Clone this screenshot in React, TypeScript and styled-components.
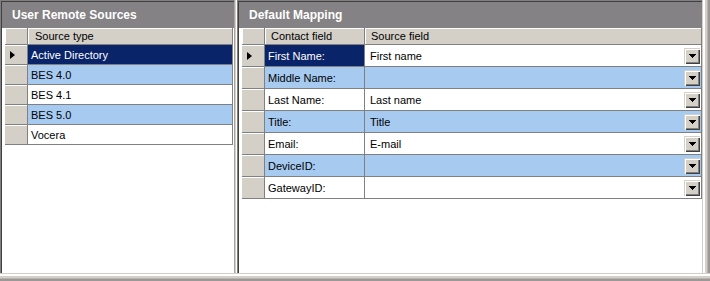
import React from 'react'
import styled, { createGlobalStyle } from 'styled-components'

type Tone = 'sel' | 'blue' | 'white'

const toneBg: Record<Tone, string> = {
  sel: '#0a246a',
  blue: '#a6caf0',
  white: '#ffffff',
}

const GlobalStyle = createGlobalStyle`
  html, body {
    margin: 0;
    padding: 0;
    background: #d4d0c8;
  }
  body {
    font-family: "Liberation Sans", Arial, sans-serif;
    font-size: 11px;
    color: #000;
  }
`

const Window = styled.div`
  width: 710px;
  height: 281px;
  display: flex;
  flex-direction: column;
  background: #d4d0c8;
  overflow: hidden;
`

const Main = styled.div`
  display: flex;
  height: 273px;
`

const Edge = styled.div<{ $vertical?: boolean }>`
  flex: none;
  ${p => (p.$vertical ? 'width: 8px;' : 'height: 8px;')}
  background: linear-gradient(
    to ${p => (p.$vertical ? 'right' : 'bottom')},
    #d4d0c8 0 1px,
    #ffffff 1px 3px,
    #d4d0c8 3px 5px,
    #b8b4b0 5px 6px,
    #9c9898 6px 8px
  );
`

const Pane = styled.section<{ $w: number }>`
  width: ${p => p.$w}px;
  flex: none;
  box-sizing: border-box;
  display: flex;
  flex-direction: column;
  padding: 2px 0 0 2px;
  background: #fff;
  box-shadow: inset 1px 1px #808080, inset 2px 2px #404040;
`

const Splitter = styled.div`
  width: 3px;
  flex: none;
  background: #d4d0c8;
  box-shadow: inset 1px 0 #a8a4a0, inset 2px 0 #d4d0c8, inset -1px 0 #ffffff;
`

const Title = styled.div`
  height: 26px;
  flex: none;
  display: flex;
  align-items: center;
  padding-left: 10px;
  background: #848284;
  color: #fff;
  font-weight: bold;
  font-size: 12px;
  white-space: nowrap;
`

const Body = styled.div`
  flex: 1;
  padding-left: 2px;
  background: #fff;
`

const Table = styled.div<{ $cols: string; $rowH: number }>`
  display: grid;
  grid-template-columns: ${p => p.$cols};
  grid-template-rows: 17px;
  grid-auto-rows: ${p => p.$rowH}px;
  border-left: 1px solid #fff;
`

const HeadCell = styled.div<{ $pad?: number }>`
  box-sizing: border-box;
  display: flex;
  align-items: center;
  padding-left: ${p => p.$pad ?? 0}px;
  background: #d4d0c8;
  border-right: 1px solid #808080;
  border-bottom: 1px solid #808080;
  box-shadow: inset 1px 1px #fff;
  white-space: nowrap;
`

const RowHead = styled.div`
  box-sizing: border-box;
  display: flex;
  align-items: center;
  padding-left: 5px;
  background: #d4d0c8;
  border-right: 1px solid #808080;
  border-bottom: 1px solid #808080;
  box-shadow: inset 0 1px #fff;
`

const Pointer = styled.span`
  width: 0;
  height: 0;
  border-top: 4px solid transparent;
  border-bottom: 4px solid transparent;
  border-left: 5px solid #000;
`

const Cell = styled.div<{ $tone: Tone; $pad: number }>`
  box-sizing: border-box;
  display: flex;
  align-items: center;
  justify-content: space-between;
  padding: 0 1px 0 ${p => p.$pad}px;
  background: ${p => toneBg[p.$tone]};
  color: ${p => (p.$tone === 'sel' ? '#fff' : '#000')};
  border-right: 1px solid #808080;
  border-bottom: 1px solid #808080;
  white-space: nowrap;
  overflow: hidden;
`

const DropButton = styled.span`
  width: 16px;
  height: 16px;
  flex: none;
  display: flex;
  align-items: center;
  justify-content: center;
  background: #d4d0c8;
  box-shadow: inset 1px 1px #d4d0c8, inset 2px 2px #fff, inset -1px -1px #404040,
    inset -2px -2px #808080;
`

const Arrow = () => (
  <svg width="7" height="4" viewBox="0 0 7 4" shapeRendering="crispEdges">
    <path d="M0 0h7v1h-1v1h-1v1h-1v1h-1v-1h-1v-1h-1v-1h-1z" fill="#000" />
  </svg>
)

const sources: [string, Tone][] = [
  ['Active Directory', 'sel'],
  ['BES 4.0', 'blue'],
  ['BES 4.1', 'white'],
  ['BES 5.0', 'blue'],
  ['Vocera', 'white'],
]

const mapping: [string, string][] = [
  ['First Name:', 'First name'],
  ['Middle Name:', ''],
  ['Last Name:', 'Last name'],
  ['Title:', 'Title'],
  ['Email:', 'E-mail'],
  ['DeviceID:', ''],
  ['GatewayID:', ''],
]

export default function App(): JSX.Element {
  return (
    <>
      <GlobalStyle />
      <Window>
        <Main>
          <Pane $w={234}>
            <Title>User Remote Sources</Title>
            <Body>
              <Table $cols="23px 205px" $rowH={20}>
                <HeadCell />
                <HeadCell $pad={7}>Source type</HeadCell>
                {sources.map(([name, tone], i) => (
                  <React.Fragment key={name}>
                    <RowHead>{i === 0 ? <Pointer /> : null}</RowHead>
                    <Cell $tone={tone} $pad={3}>{name}</Cell>
                  </React.Fragment>
                ))}
              </Table>
            </Body>
          </Pane>
          <Splitter />
          <Pane $w={465}>
            <Title>Default Mapping</Title>
            <Body>
              <Table $cols="23px 100px 337px" $rowH={22}>
                <HeadCell />
                <HeadCell $pad={6}>Contact field</HeadCell>
                <HeadCell $pad={6}>Source field</HeadCell>
                {mapping.map(([contact, source], i) => {
                  const tone: Tone = i % 2 === 1 ? 'blue' : 'white'
                  return (
                    <React.Fragment key={contact}>
                      <RowHead>{i === 0 ? <Pointer /> : null}</RowHead>
                      <Cell $tone={i === 0 ? 'sel' : tone} $pad={3}>{contact}</Cell>
                      <Cell $tone={tone} $pad={5}>
                        <span>{source}</span>
                        <DropButton><Arrow /></DropButton>
                      </Cell>
                    </React.Fragment>
                  )
                })}
              </Table>
            </Body>
          </Pane>
          <Edge $vertical />
        </Main>
        <Edge />
      </Window>
    </>
  )
}
